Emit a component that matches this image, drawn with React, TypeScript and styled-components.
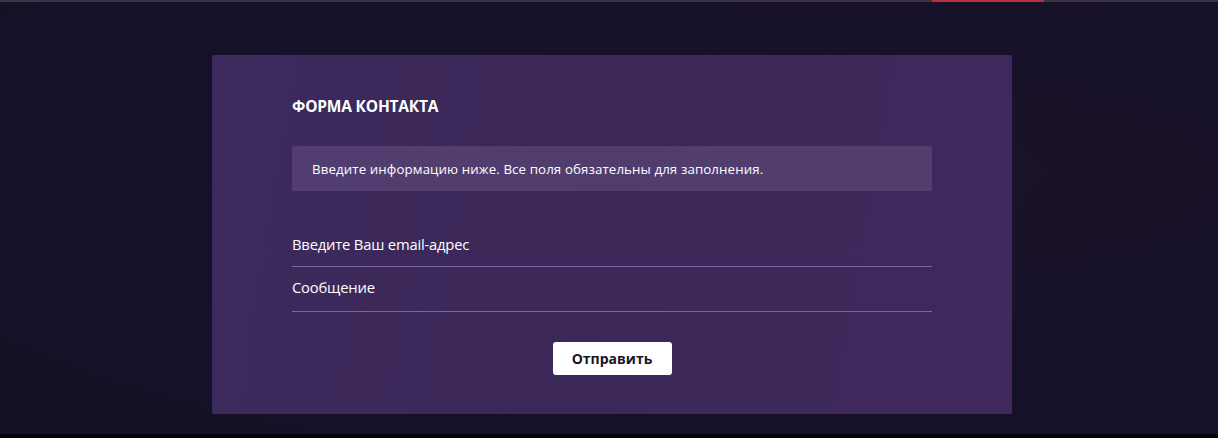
import styled, { createGlobalStyle } from 'styled-components';

const GlobalStyle = createGlobalStyle`
  html, body {
    margin: 0;
    padding: 0;
    background: #15112a;
  }
  body {
    font-family: "Open Sans", "Noto Sans", "DejaVu Sans", sans-serif;
    color: #fff;
  }
`;

const Page = styled.div`
  width: 1218px;
  height: 438px;
  display: flex;
  flex-direction: column;
  background: radial-gradient(ellipse at 75% 40%, #1a1228 0%, #15112a 60%, #141126 100%);
  overflow: hidden;
`;

const TopBar = styled.div`
  height: 2px;
  flex-shrink: 0;
  background: #3a3446;
  display: flex;
`;

const TopBarAccent = styled.div`
  margin-left: 932px;
  width: 112px;
  background: #b8323f;
`;

const Main = styled.main`
  flex: 1;
  display: flex;
  justify-content: center;
  padding: 53px 0 0 6px;
`;

const Card = styled.section`
  width: 800px;
  height: 359px;
  box-sizing: border-box;
  padding: 40px 80px 0;
  background: linear-gradient(100deg, #3d2a5d 0%, #3b2858 50%, #40295d 100%);
  border-radius: 2px;
  display: flex;
  flex-direction: column;
`;

const Title = styled.h2`
  margin: 0;
  font-size: 15.5px;
  line-height: 22px;
  font-weight: 700;
  letter-spacing: -0.2px;
  text-transform: uppercase;
`;

const Notice = styled.div`
  margin-top: 29px;
  height: 45px;
  box-sizing: border-box;
  padding: 0 20px;
  display: flex;
  align-items: center;
  background: rgba(120, 100, 150, 0.35);
  border-radius: 2px;
  font-size: 13.3px;
  letter-spacing: 0.1px;
`;

const Fields = styled.div`
  margin-top: 33px;
  display: flex;
  flex-direction: column;
`;

const Field = styled.label<{ $height: number }>`
  height: ${p => p.$height}px;
  box-sizing: border-box;
  padding-bottom: ${p => (p.$height > 43 ? 4 : 2)}px;
  display: flex;
  align-items: center;
  border-bottom: 1px solid #7a66a0;
  font-size: 14.8px;
  letter-spacing: -0.2px;
`;

const Actions = styled.div`
  margin-top: 30px;
  display: flex;
  justify-content: center;
`;

const SubmitButton = styled.button`
  width: 119px;
  height: 33px;
  border: none;
  border-radius: 3px;
  background: #fff;
  color: #1b1424;
  font-family: inherit;
  font-size: 14px;
  font-weight: 700;
  cursor: pointer;
`;

const BottomStrip = styled.div`
  height: 4px;
  flex-shrink: 0;
  background: #050407;
`;

export default function App() {
  return (
    <>
      <GlobalStyle />
      <Page>
        <TopBar>
          <TopBarAccent />
        </TopBar>
        <Main>
          <Card>
            <Title>Форма контакта</Title>
            <Notice>Введите информацию ниже. Все поля обязательны для заполнения.</Notice>
            <Fields>
              <Field $height={43}>Введите Ваш email-адрес</Field>
              <Field $height={45}>Сообщение</Field>
            </Fields>
            <Actions>
              <SubmitButton type="button">Отправить</SubmitButton>
            </Actions>
          </Card>
        </Main>
        <BottomStrip />
      </Page>
    </>
  );
}
